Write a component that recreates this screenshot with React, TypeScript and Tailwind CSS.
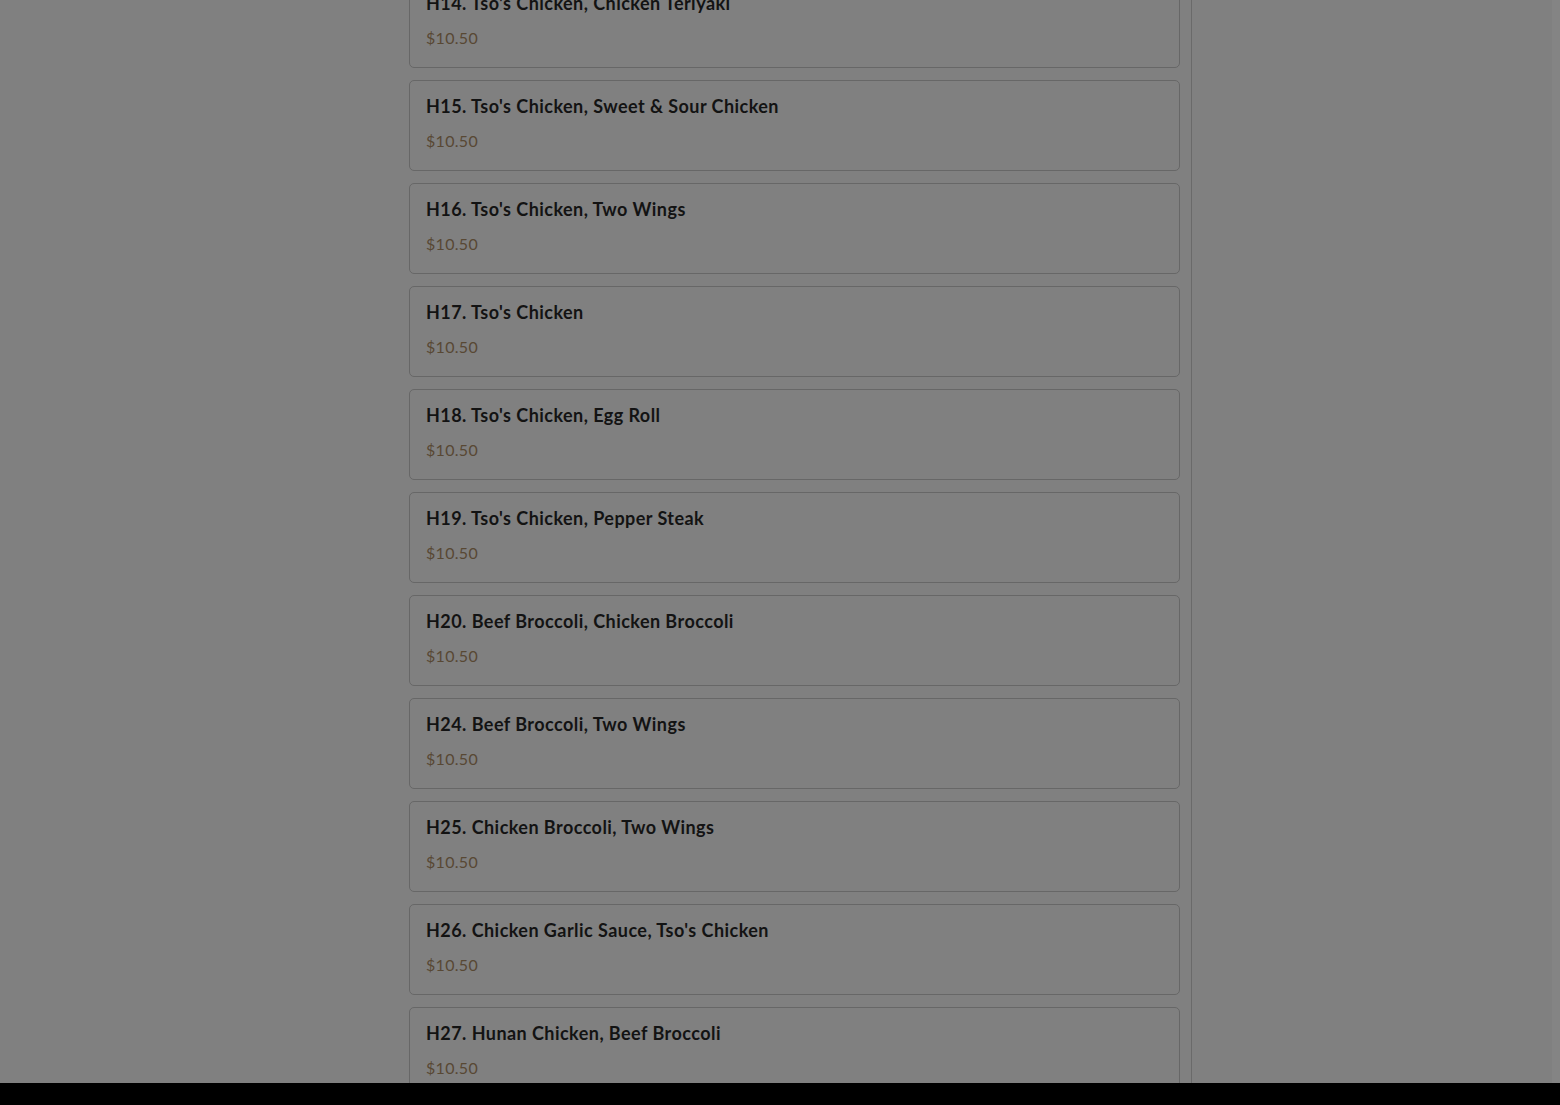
import React from "react";

const items = [
  "H14. Tso's Chicken, Chicken Teriyaki",
  "H15. Tso's Chicken, Sweet & Sour Chicken",
  "H16. Tso's Chicken, Two Wings",
  "H17. Tso's Chicken",
  "H18. Tso's Chicken, Egg Roll",
  "H19. Tso's Chicken, Pepper Steak",
  "H20. Beef Broccoli, Chicken Broccoli",
  "H24. Beef Broccoli, Two Wings",
  "H25. Chicken Broccoli, Two Wings",
  "H26. Chicken Garlic Sauce, Tso's Chicken",
  "H27. Hunan Chicken, Beef Broccoli",
];

export default function App() {
  return (
    <div
      className="w-full h-[1105px] flex flex-col bg-[#808080] overflow-hidden"
      style={{ fontFamily: "Lato, 'Open Sans', sans-serif" }}
    >
      <div className="flex-1 flex overflow-hidden">
        <div className="flex-1 flex overflow-hidden">
          <div className="ml-[397px] w-[795px] border-r border-[#6a6a6a] pl-3 pr-[11px]">
            <div className="flex flex-col gap-3 mt-[-23px]">
              {items.map((t) => (
                <div
                  key={t}
                  className="border border-[#676767] rounded-[5px] bg-[#808080] px-4 pt-3 pb-[17px]"
                >
                  <div className="text-[18px] leading-[26px] font-bold tracking-[0.45px] text-[#131313]">{t}</div>
                  <div className="mt-[10px] text-[16px] leading-[24px] tracking-[0.3px] text-[#584834]">$10.50</div>
                </div>
              ))}
            </div>
          </div>
        </div>
        <div className="w-2 bg-[#848484]" />
      </div>
      <div className="h-[22px] bg-black shrink-0" />
    </div>
  );
}
